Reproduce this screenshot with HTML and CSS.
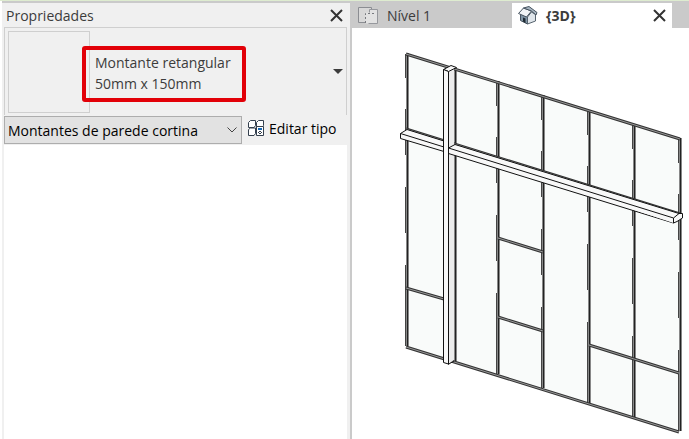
FILE: index.html
```html
<!DOCTYPE html>
<html lang="pt-BR">
<head>
  <meta charset="utf-8">
  <title>Propriedades</title>
  <link rel="stylesheet" href="styles.css">
</head>
<body>

  <div class="app">
    <aside class="properties">
      <header class="panel-header">
        <h2 class="panel-title">Propriedades</h2>
        <button class="close-btn" type="button" aria-label="Fechar propriedades">
          <svg width="13" height="13" viewBox="0 0 13 13"><path d="M1 1L12 12M12 1L1 12"/></svg>
        </button>
      </header>

      <button class="type-selector" type="button">
        <span class="type-preview"></span>
        <span class="type-name">Montante retangular<br>50mm x 150mm</span>
        <svg class="type-arrow" width="10" height="5" viewBox="0 0 10 5"><path d="M0 0H10L5 5Z"/></svg>
      </button>

      <div class="filter-row">
        <div class="filter">
          <select class="filter-select" aria-label="Filtro de categoria">
            <option>Montantes de parede cortina</option>
          </select>
          <svg class="filter-arrow" width="10" height="6" viewBox="0 0 10 6"><path d="M0.5 0.5L5 5L9.5 0.5"/></svg>
        </div>
        <button class="edit-type" type="button">
          <svg width="17" height="17" viewBox="0 0 17 17">
            <g fill="#fff" stroke="#35404e">
              <path d="M0.5 2.5L2.5 0.5H7.5V5.5L6 7.5H0.5Z"/>
              <path d="M8.5 2.5L10.5 0.5H15.5V5.5L14 7.5H8.5Z"/>
              <path d="M0.5 9.5L2.5 8H7.5V13.5L6 15.5H0.5Z"/>
              <path d="M8.5 6.5H15.5V15.5H8.5Z"/>
            </g>
            <path fill="#1769b5" d="M10 8H14V10H10Z"/>
            <path fill="#35404e" d="M10 12H11V13H10ZM13 12H14V13H13ZM11 11H13V12H11ZM11 13H13V14H11Z"/>
          </svg>
          Editar tipo
        </button>
      </div>

      <div class="property-list"></div>
    </aside>

    <main class="views">
      <nav class="tabs">
        <button class="tab" type="button">
          <svg width="21" height="19" viewBox="0 0 21 19">
            <path d="M0.5 1.5H13.5V16.5H0.5Z" fill="#d8d8d8" stroke="#8b8d92"/>
            <path d="M7.5 6.5H11.5V3.5H19.5V17.5H7.5Z" fill="#e2e2e2"/>
            <path d="M11.5 6.5V3.5H19.5V17.5H10.5" fill="none" stroke="#96989d"/>
            <path d="M7.5 17V7.5H18" fill="none" stroke="#77797e" stroke-dasharray="2 2"/>
          </svg>
          Nível 1
        </button>
        <div class="tab tab-active">
          <svg width="20" height="19" viewBox="0 0 20 19">
            <path d="M2.5 8L9.5 11V18L2.5 14.5Z" fill="#8195a5" stroke="#46535f"/>
            <path d="M5 11.5L7.5 12.5V17L5 15.5Z" fill="#1f2a33"/>
            <path d="M9.5 11L13.5 6L17.5 8.5V15L9.5 18Z" fill="#dfe5ea" stroke="#56636e"/>
            <path d="M0.5 7.5L5.5 2L13.5 5L8.5 11Z" fill="#f1f4f6" stroke="#46535f"/>
            <path d="M5.5 2L11 0.5L19 6.5L18 9L13.5 5Z" fill="#a9b7c2" stroke="#46535f"/>
          </svg>
          <span class="tab-label">{3D}</span>
          <button class="close-btn" type="button" aria-label="Fechar vista">
            <svg width="13" height="13" viewBox="0 0 13 13"><path d="M1 1L12 12M12 1L1 12"/></svg>
          </button>
        </div>
      </nav>

      <svg class="model" viewBox="352 28 337 411" role="img" aria-label="Parede cortina em 3D">
        <defs>
          <!-- one vertical mullion, top at 0,0 -->
          <g id="mullion">
            <path class="depth" d="M-1.5 1V25M-1.5 56V102M-1.5 134V180M-1.5 212V293"/>
            <path class="band" d="M0.5 0V293"/>
            <path class="edge" d="M0.5 0V293"/>
          </g>
          <path id="rails" d="M406 54L680 139M406 129L680 214M406 347L679 432M406 288L444 299M498 238L543 252M498 317L543 331M589 345L679 373"/>
        </defs>

        <path class="glass" d="M406 54L680 139V431L406 346Z"/>

        <use href="#mullion" x="407" y="53"/>
        <use href="#mullion" x="455" y="68"/>
        <use href="#mullion" x="498" y="81"/>
        <use href="#mullion" x="543" y="95"/>
        <use href="#mullion" x="589" y="110"/>
        <use href="#mullion" x="634" y="124"/>
        <use href="#mullion" x="680" y="138"/>

        <use class="rail" href="#rails"/>
        <use class="rail-core" href="#rails"/>

        <!-- vertical beam, side and cap -->
        <path class="beam-side" d="M448 71V364L454 360V68Z"/>
        <path class="beam" d="M443.5 69.5L451 65.5L456.5 67.5L448.5 71.5Z"/>

        <!-- horizontal beam, cut by the vertical one -->
        <path class="beam" d="M400.5 133.5L407 129.5L444 141V151.5L400.5 138.5Z"/>
        <path class="beam" d="M400.5 133.5L444 147"/>
        <path class="beam" d="M448.5 148L455 144.5L679 213.5L682.5 213.5V218L677 221.5L673.5 223L448.5 153.5Z"/>
        <path class="beam" d="M448.5 148L673.5 218V223M673.5 218L679 213.5"/>

        <!-- vertical beam, front -->
        <path class="beam" d="M443.5 69.5L448.5 71.5V364L443.5 362.5Z"/>
        <path class="beam" d="M448 364.5L454 361"/>
      </svg>
    </main>
  </div>

</body>
</html>
```
FILE: styles.css
```css
* {
  box-sizing: border-box;
}

body {
  margin: 0;
  font-family: "Open Sans", "Noto Sans", sans-serif;
  font-size: 14px;
  color: #3c3c3c;
}

button {
  font: inherit;
  color: inherit;
  padding: 0;
  border: 0;
  background: none;
}

.app {
  display: flex;
  min-height: 100vh;
  border-top: 1px solid #deecd0;
}

.properties {
  display: flex;
  flex-direction: column;
  width: 50.8%;
  margin-left: 2px;
  padding: 0 3px 0 2px;
  background: #f0f0f0;
  border-top: 2px solid #cacaca;
  border-right: 2px solid #cacaca;
}

.panel-header {
  display: flex;
  justify-content: space-between;
  align-items: center;
  height: 24px;
  padding: 0 4px 0 2px;
}

.panel-title {
  margin: 0;
  font-size: 14px;
  font-weight: 400;
}

.close-btn {
  display: flex;
}

.close-btn path {
  fill: none;
  stroke: #333;
  stroke-width: 2;
}

.type-selector {
  display: flex;
  align-items: center;
  height: 88px;
  padding: 0 3px;
  text-align: left;
  border: 1px solid #cfcfcf;
  border-bottom: 0;
}

.type-preview {
  width: 82px;
  height: 82px;
  border: 1px solid #cfcfcf;
}

.type-name {
  margin: 4px 0 0 -8px;
  padding: 2px 11px 4px 9px;
  line-height: 21px;
  border: 4px solid #e20008;
  border-radius: 3px;
}

.type-arrow {
  margin-left: auto;
  fill: #3c3c3c;
}

.filter-row {
  display: flex;
  align-items: center;
  gap: 6px;
  height: 30px;
  color: #000;
}

.filter {
  display: grid;
  align-items: center;
  width: 238px;
}

.filter-select {
  grid-area: 1 / 1;
  height: 28px;
  padding: 0 3px;
  font: inherit;
  color: #000;
  appearance: none;
  background: #e2e2e2;
  border: 1px solid #adadad;
  border-radius: 0;
}

.filter-arrow {
  grid-area: 1 / 1;
  justify-self: end;
  margin-right: 5px;
  fill: none;
  stroke: #444;
  pointer-events: none;
}

.edit-type {
  display: flex;
  align-items: center;
  gap: 4px;
  padding-bottom: 4px;
}

.property-list {
  flex: 1;
  background: #fff;
}

.views {
  flex: 1;
  min-width: 0;
}

.tabs {
  display: flex;
  height: 27px;
  padding-top: 2px;
  background: #cacaca;
}

.tab {
  display: flex;
  align-items: center;
  gap: 8px;
  width: 160px;
  padding: 0 6px;
}

.tab-active {
  font-weight: 700;
  background: #fff;
}

.tab-active .close-btn {
  margin-left: auto;
}

.model {
  display: block;
  width: 100%;
}

.glass {
  fill: #f9fbfa;
}

.depth {
  stroke: #444;
  stroke-width: 1;
}

.band {
  stroke: #888;
  stroke-width: 3;
}

.edge {
  stroke: #222;
}

.rail {
  fill: none;
  stroke: #333;
  stroke-width: 3;
}

.rail-core {
  fill: none;
  stroke: #999;
  stroke-width: 1;
}

.beam {
  fill: #f8f8f8;
  stroke: #111;
  stroke-linejoin: round;
}

.beam-side {
  fill: #ececec;
}
```
